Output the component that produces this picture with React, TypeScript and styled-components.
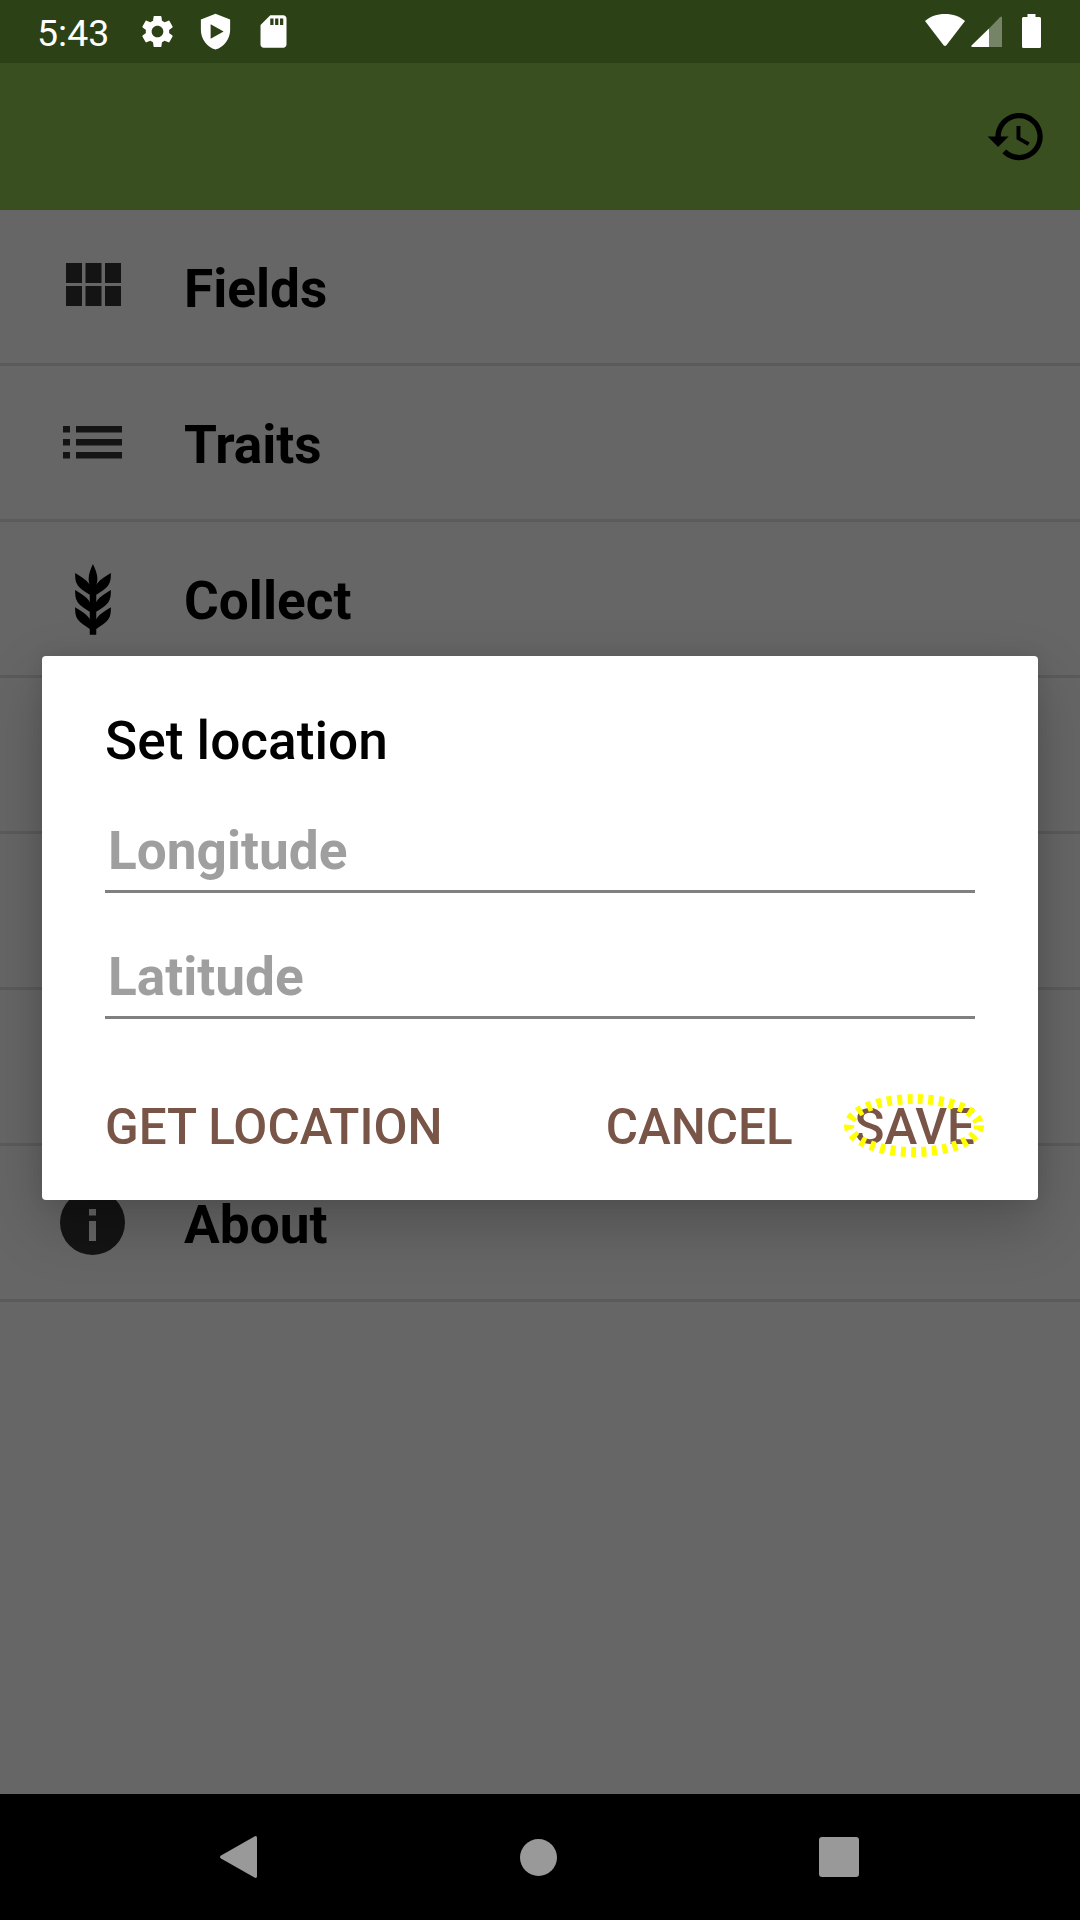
import React from "react";
import styled, { createGlobalStyle } from "styled-components";

const Global = createGlobalStyle`
  html, body { margin: 0; padding: 0; background: #666666; }
  #root { width: 1080px; height: 1920px; }
`;

const Screen = styled.div`
  position: relative;
  width: 1080px;
  height: 1920px;
  display: flex;
  flex-direction: column;
  overflow: hidden;
  font-family: Roboto, "Liberation Sans", sans-serif;
  background: #666666;
`;

const StatusBar = styled.div`
  height: 63px;
  flex: none;
  display: flex;
  align-items: center;
  padding: 0 39px 0 37px;
  background: #2c4116;
  color: #ffffff;
`;

const Clock = styled.span`
  font-size: 37.5px;
  line-height: 63px;
  padding-top: 3px;
  width: 100.5px;
  flex: none;
`;

const StatusIcons = styled.div`
  display: flex;
  align-items: center;
  gap: 19px;
`;

const SystemIcons = styled.div`
  display: flex;
  align-items: center;
  margin-left: auto;
`;

const Glyph = styled.svg<{ $gap?: number }>`
  display: block;
  flex: none;
  fill: currentColor;
  margin-right: ${(p) => p.$gap ?? 0}px;
`;

const Toolbar = styled.div`
  height: 147px;
  flex: none;
  display: flex;
  align-items: center;
  justify-content: flex-end;
  padding: 0 32px 0 0;
  background: #394f1f;
  color: #000000;
`;

const Menu = styled.div`
  flex: 1;
  display: flex;
  flex-direction: column;
`;

const Row = styled.div`
  height: 156px;
  box-sizing: border-box;
  flex: none;
  display: flex;
  align-items: center;
  border-bottom: 3px solid #5b5b5b;
`;

const RowIcon = styled.div<{ $color?: string }>`
  width: 185px;
  flex: none;
  display: flex;
  justify-content: center;
  color: ${(p) => p.$color ?? "#141414"};
`;

const RowLabel = styled.span`
  font-size: 53.2px;
  font-weight: 700;
  color: #000000;
  line-height: 60px;
  padding-top: 4px;
  margin-left: -1px;
`;

const NavBar = styled.div`
  height: 126px;
  flex: none;
  display: flex;
  align-items: center;
  justify-content: center;
  padding-right: 3px;
  background: #000000;
  color: #999999;
`;

const NavSlot = styled.div`
  width: 300px;
  display: flex;
  justify-content: center;
`;

const Dialog = styled.div`
  position: absolute;
  left: 42px;
  top: 656px;
  width: 996px;
  height: 544px;
  box-sizing: border-box;
  padding: 0 63px;
  display: flex;
  flex-direction: column;
  background: #ffffff;
  border-radius: 4px;
  box-shadow: 0 24px 60px rgba(0, 0, 0, 0.22), 0 0 18px rgba(0, 0, 0, 0.08);
`;

const Title = styled.div`
  font-size: 53.2px;
  font-weight: 500;
  line-height: 62px;
  margin-top: 54px;
  color: #000000;
`;

const Field = styled.div`
  height: 77px;
  box-sizing: border-box;
  border-bottom: 3px solid #808080;
  padding-left: 3px;
  font-size: 53.2px;
  font-weight: 700;
  line-height: 70px;
  color: #9f9f9f;
`;

const FirstField = styled(Field)`
  margin-top: 44px;
`;

const NextField = styled(Field)`
  margin-top: 49px;
`;

const Actions = styled.div`
  display: flex;
  align-items: center;
  margin-top: 80px;
  font-size: 49.4px;
  font-weight: 500;
  line-height: 56px;
  color: #795548;
`;

const CancelLabel = styled.span`
  margin-left: auto;
`;

const SaveLabel = styled.span`
  position: relative;
  margin-left: 62px;
`;

const Highlight = styled.svg`
  position: absolute;
  left: -11px;
  top: -5px;
  overflow: visible;
  fill: none;
  stroke: #ffff00;
  stroke-width: 10;
  stroke-dasharray: 5 5.4;
`;

export default function App() {
  return (
    <Screen>
      <Global />
      <StatusBar>
        <Clock>5:43</Clock>
        <StatusIcons>
          <Glyph width="39" height="39" viewBox="0 0 24 24">
            <path d="M19.14 12.94c.04-.3.06-.61.06-.94 0-.32-.02-.64-.07-.94l2.03-1.58c.18-.14.23-.41.12-.61l-1.92-3.32c-.12-.22-.37-.29-.59-.22l-2.39.96c-.5-.38-1.03-.7-1.62-.94l-.36-2.54c-.04-.24-.24-.41-.48-.41h-3.84c-.24 0-.43.17-.47.41l-.36 2.54c-.59.24-1.13.57-1.62.94l-2.39-.96c-.22-.08-.47 0-.59.22L2.74 8.87c-.12.21-.08.47.12.61l2.03 1.58c-.05.3-.09.63-.09.94s.02.64.07.94l-2.03 1.58c-.18.14-.23.41-.12.61l1.92 3.32c.12.22.37.29.59.22l2.39-.96c.5.38 1.03.7 1.62.94l.36 2.54c.05.24.24.41.48.41h3.84c.24 0 .44-.17.47-.41l.36-2.54c.59-.24 1.13-.56 1.62-.94l2.39.96c.22.08.47 0 .59-.22l1.92-3.32c.12-.22.07-.47-.12-.61l-2.01-1.58zM12 15.6c-1.98 0-3.6-1.62-3.6-3.6s1.62-3.6 3.6-3.6 3.6 1.62 3.6 3.6-1.62 3.6-3.6 3.6z" />
          </Glyph>
          <Glyph width="39" height="39" viewBox="0 0 24 24">
            <path fillRule="evenodd" d="M12 1 L3 4.6 V11 C3 16.6 6.8 21.6 12 23 C17.2 21.6 21 16.6 21 11 V4.6 Z M9 7.6 L17 12 L9 16.4 Z" />
          </Glyph>
          <Glyph width="39" height="39" viewBox="0 0 24 24">
            <path d="M18 2h-8L4.02 8 4 20c0 1.1.9 2 2 2h12c1.1 0 2-.9 2-2V4c0-1.1-.9-2-2-2zm-6 6h-2V4h2v4zm3 0h-2V4h2v4zm3 0h-2V4h2v4z" />
          </Glyph>
        </StatusIcons>
        <SystemIcons>
          <Glyph width="40" height="63" viewBox="0 0 40 63" $gap={6}>
            <path d="M20 14C28 14 35 16.5 40 21L21.4 45.2Q20 46.6 18.6 45.2L0 21C5 16.5 12 14 20 14Z" />
          </Glyph>
          <Glyph width="31" height="63" viewBox="0 0 31 63" $gap={20}>
            <path d="M0.5 45.5L18 28.5V47H1.5Q-0.3 47 0.5 45.5Z" />
            <path d="M18 28.5L29 17.2Q31 15.6 31 18V47H18Z" opacity="0.35" />
          </Glyph>
          <Glyph width="19" height="63" viewBox="0 0 19 63">
            <path d="M5.5 14H13.5V17H17.5Q19 17 19 18.5V46.5Q19 48 17.5 48H1.5Q0 48 0 46.5V18.5Q0 17 1.5 17H5.5Z" />
          </Glyph>
        </SystemIcons>
      </StatusBar>
      <Toolbar>
        <Glyph width="63" height="63" viewBox="0 0 24 24">
          <path d="M13 3c-4.97 0-9 4.03-9 9H1l3.89 3.89.07.14L9 12H6c0-3.87 3.13-7 7-7s7 3.13 7 7-3.13 7-7 7c-1.93 0-3.68-.79-4.94-2.06l-1.42 1.42C8.27 19.99 10.51 21 13 21c4.97 0 9-4.03 9-9s-4.03-9-9-9zm-1 5v5l4.28 2.54.72-1.21-3.5-2.08V8H12z" />
        </Glyph>
      </Toolbar>
      <Menu>
        <Row>
          <RowIcon>
            <Glyph width="57" height="47" viewBox="-2 0 57 47">
              <path d="M0 0H16V20H0ZM19.5 0H35.5V20H19.5ZM39 0H55V20H39ZM0 23H16V43H0ZM19.5 23H35.5V43H19.5ZM39 23H55V43H39Z" />
            </Glyph>
          </RowIcon>
          <RowLabel>Fields</RowLabel>
        </Row>
        <Row>
          <RowIcon>
            <Glyph width="59" height="33" viewBox="0 0 59 33">
              <path d="M0 0H7V6.500H0ZM0 13H7V19.500H0ZM0 26H7V32.500H0ZM13 0H59V6.500H13ZM13 13H59V19.500H13ZM13 26H59V32.500H13Z" />
            </Glyph>
          </RowIcon>
          <RowLabel>Traits</RowLabel>
        </Row>
        <Row>
          <RowIcon $color="#000000">
            <Glyph width="78" height="78" viewBox="0 0 24 24">
              <path d="M7.33,18.33C6.5,17.17 6.5,15.83 6.5,14.5C8.17,15.5 9.83,16.5 10.67,17.67L11,18.23V15.95C9.5,15.05 8.08,14.13 7.33,13.08C6.5,11.92 6.5,10.58 6.5,9.25C8.17,10.25 9.83,11.25 10.67,12.42L11,13V10.7C9.5,9.8 8.08,8.88 7.33,7.83C6.5,6.67 6.5,5.33 6.5,4C8.17,5 9.83,6 10.67,7.17C10.77,7.31 10.86,7.46 10.94,7.62C10.77,7 10.66,6.42 10.65,5.82C10.64,4.31 11.3,2.76 11.96,1.21C12.65,2.69 13.34,4.18 13.35,5.69C13.36,6.32 13.25,6.96 13.07,7.59C13.15,7.45 13.23,7.31 13.33,7.17C14.17,6 15.83,5 17.5,4C17.5,5.33 17.5,6.67 16.67,7.83C15.92,8.88 14.5,9.8 13,10.7V13L13.33,12.42C14.17,11.25 15.83,10.25 17.5,9.25C17.5,10.58 17.5,11.92 16.67,13.08C15.92,14.13 14.5,15.05 13,15.95V18.23L13.33,17.67C14.17,16.5 15.83,15.5 17.5,14.5C17.5,15.83 17.5,17.17 16.67,18.33C15.92,19.38 14.5,20.3 13,21.2V23H11V21.2C9.5,20.3 8.08,19.38 7.33,18.33Z" />
            </Glyph>
          </RowIcon>
          <RowLabel>Collect</RowLabel>
        </Row>
        <Row />
        <Row />
        <Row />
        <Row>
          <RowIcon>
            <Glyph width="65" height="65" viewBox="0 0 65 65">
              <path fillRule="evenodd" d="M32.500 0A32.500 32.500 0 1 0 32.500 65A32.500 32.500 0 1 0 32.500 0ZM29 19H36V25.500H29ZM29 31H36V51H29Z" />
            </Glyph>
          </RowIcon>
          <RowLabel>About</RowLabel>
        </Row>
      </Menu>
      <NavBar>
        <NavSlot>
          <Glyph width="37" height="42" viewBox="0 0 37 42">
            <path d="M1 19.500L34 0.700Q37 -1 37 2V40Q37 43 34 41.300L1 22.500Q-1 21 1 19.500Z" />
          </Glyph>
        </NavSlot>
        <NavSlot>
          <Glyph width="37" height="37" viewBox="0 0 37 37">
            <circle cx="18.500" cy="18.500" r="18.500" />
          </Glyph>
        </NavSlot>
        <NavSlot>
          <Glyph width="40" height="40" viewBox="0 0 40 40">
            <rect width="40" height="40" rx="3" />
          </Glyph>
        </NavSlot>
      </NavBar>
      <Dialog>
        <Title>Set location</Title>
        <FirstField>Longitude</FirstField>
        <NextField>Latitude</NextField>
        <Actions>
          <span>GET LOCATION</span>
          <CancelLabel>CANCEL</CancelLabel>
          <SaveLabel>
            SAVE
            <Highlight width="140" height="63" viewBox="0 0 140 63">
              <ellipse cx="70" cy="31.500" rx="65" ry="26.500" />
            </Highlight>
          </SaveLabel>
        </Actions>
      </Dialog>
    </Screen>
  );
}
